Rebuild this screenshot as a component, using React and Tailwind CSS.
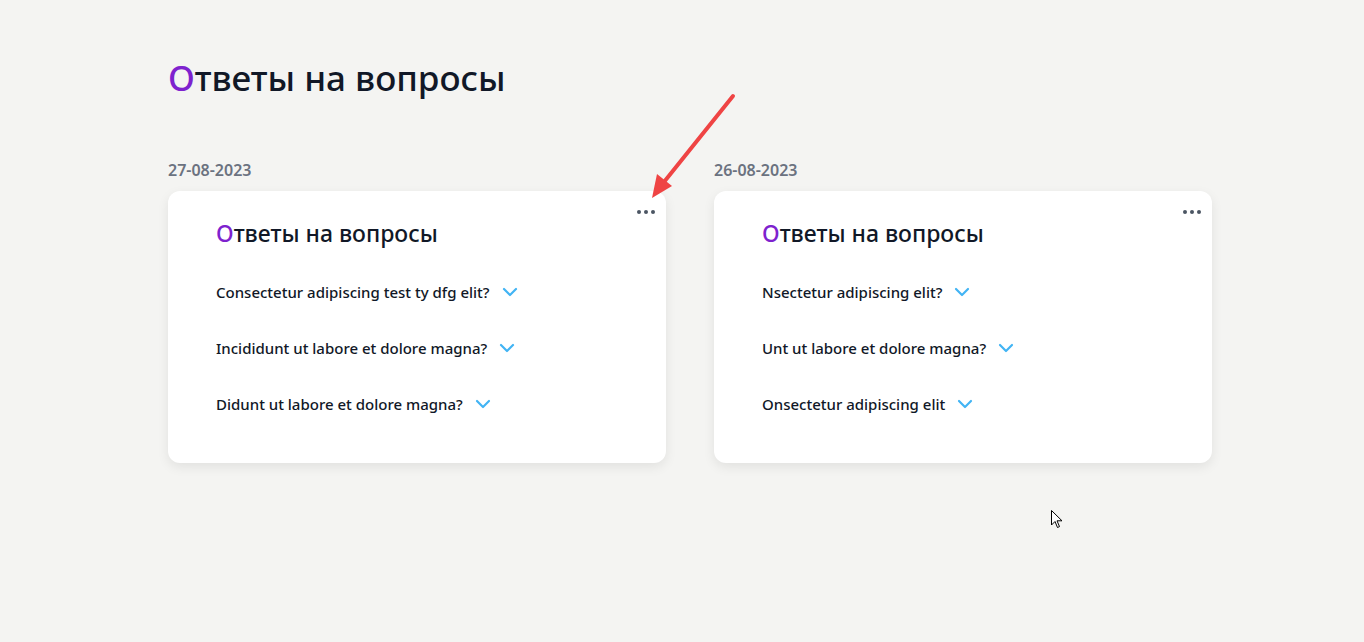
import { ChevronDown } from 'lucide-react';

const cards = [
  {
    date: '27-08-2023',
    questions: [
      'Consectetur adipiscing test ty dfg elit?',
      'Incididunt ut labore et dolore magna?',
      'Didunt ut labore et dolore magna?',
    ],
  },
  {
    date: '26-08-2023',
    questions: [
      'Nsectetur adipiscing elit?',
      'Unt ut labore et dolore magna?',
      'Onsectetur adipiscing elit',
    ],
  },
];

const Title = ({ className }) => (
  <h2 className={className}>
    <span className="text-[#7e22ce]">О</span>тветы на вопросы
  </h2>
);

const App = () => {
  return (
    <div className="relative min-h-[642px] bg-[#f4f4f2] font-['Noto_Sans',sans-serif] text-[#111827]">
      <div className="pl-[168px] pt-[54px]">
        <Title className="text-[35px] leading-[48px] font-medium" />

        <div className="mt-[58px] flex gap-12">
          {cards.map((card) => (
            <div key={card.date} className="w-[498px]">
              <div className="text-base font-semibold text-[#6b7280] leading-5 mb-[11px]">{card.date}</div>
              <div className="relative h-[272px] rounded-xl bg-white shadow-[0_4px_12px_rgba(0,0,0,0.08)] pl-12 pt-[26px]">
                <button className="absolute right-[7px] top-[15px] flex gap-[3px] p-1">
                  <span className="w-1 h-1 rounded-full bg-[#4b5563]" />
                  <span className="w-1 h-1 rounded-full bg-[#4b5563]" />
                  <span className="w-1 h-1 rounded-full bg-[#4b5563]" />
                </button>
                <Title className="text-[23px] leading-8 font-medium" />
                <div className="mt-[31px] flex flex-col gap-8">
                  {card.questions.map((q) => (
                    <div key={q} className="flex items-center gap-2 text-[15px] leading-[22px] font-medium">
                      {q}
                      <ChevronDown className="w-6 h-6 text-[#42b4f4]" strokeWidth={2.2} />
                    </div>
                  ))}
                </div>
              </div>
            </div>
          ))}
        </div>
      </div>

      {/* annotation arrow */}
      <svg className="absolute left-0 top-0 pointer-events-none" width="1364" height="642">
        <line x1="733" y1="96" x2="664" y2="182" stroke="#ef4444" strokeWidth="4" strokeLinecap="round" />
        <polygon points="652,198 657,174 672,186" fill="#ef4444" />
      </svg>

      {/* mouse cursor */}
      <svg className="absolute left-[1051px] top-[510px]" width="12" height="19" viewBox="0 0 12 19">
        <path d="M0.5 0.5 L0.5 15 L4 11.5 L6.5 17.5 L8.5 16.6 L6 10.8 L11 10.8 Z" fill="#fff" stroke="#000" strokeWidth="1" strokeLinejoin="round" />
      </svg>
    </div>
  );
};

export default App;
